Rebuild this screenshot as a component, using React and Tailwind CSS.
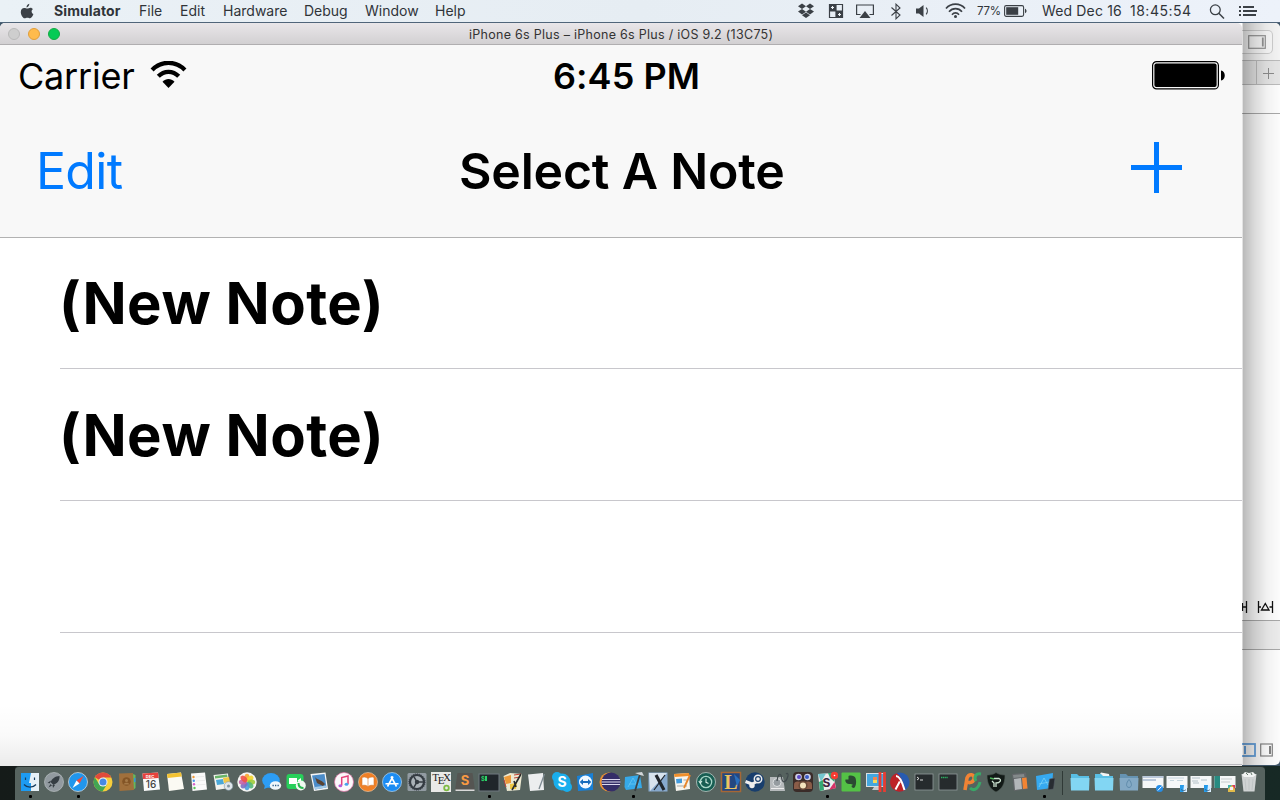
import React from 'react';

const S = ({ children, w = 22, h = 22, vb, className = '' }) => (
  <svg width={w} height={h} viewBox={vb || `0 0 ${w} ${h}`} className={`block shrink-0 ${className}`} fill="none">
    {children}
  </svg>
);

const Wifi = ({ w, h, color }) => (
  <svg width={w} height={h} viewBox="0 0 36 27" className="mb-[3px] block shrink-0" fill="none">
    <path d="M1.600 9C10.500-.6 25.500-.6 34.400 9" stroke={color} strokeWidth="4.200" />
    <path d="M7.800 15.300C13.500 9.300 22.500 9.300 28.200 15.300" stroke={color} strokeWidth="4.200" />
    <path d="M18 27L12 20.700C15.500 17.200 20.500 17.200 24 20.700Z" fill={color} />
  </svg>
);

const menus = [
  ['File', 'w-[41px]'],
  ['Edit', 'w-[43px]'],
  ['Hardware', 'w-[81px]'],
  ['Debug', 'w-[61px]'],
  ['Window', 'w-[70px]'],
  ['Help', 'w-[50px]'],
];

function MenuBar() {
  const c = '#3b4046';
  return (
    <div className="flex h-[23px] w-full items-center border-b border-[#50657a] bg-[linear-gradient(90deg,#eaf1f6,#e6edf3_50%,#edf2fa)] text-[14px] leading-[22px] text-[#303439]">
      <S w={14} h={17} className="ml-[20px]">
        <path d="M9.300.8C9.400 2.500 8.300 4.200 6.500 4.400 6.300 2.800 7.700 1.100 9.300.8Z" fill={c} />
        <path d="M12.800 6.200C11 7.300 11.200 10.200 13.400 11.100 12.800 13 11.500 15.300 10.100 15.300 9 15.300 8.700 14.700 7.400 14.700 6.100 14.700 5.700 15.300 4.700 15.300 2.800 15.300.8 11.900.8 9 .8 6.400 2.400 4.900 4.200 4.900 5.500 4.900 6.300 5.600 7.300 5.600 8.200 5.600 9.200 4.800 10.500 4.800 11.500 4.800 12.300 5.400 12.800 6.200Z" fill={c} />
      </S>
      <span className="ml-[20px] w-[85px] text-[14px] font-bold tracking-[0.100px]">Simulator</span>
      {menus.map(([m, w]) => (
        <span key={m} className={`${w} shrink-0 whitespace-nowrap`}>{m}</span>
      ))}
      <div className="flex-1" />
      <S w={18} h={16}>
        <path d="M5 .5L9 3.300 5 6 1 3.200ZM13 .5L17 3.200 13 6 9 3.300ZM1 8.500L5 6 9 8.700 5 11.400ZM17 8.500L13 6 9 8.700 13 11.400ZM5 12.200L9 9.500 13 12.200 9 15Z" fill={c} />
      </S>
      <S w={16} h={16} className="ml-[13px]">
        <path d="M1 1H8V8H1ZM8 8H15V15H8Z" fill={c} />
        <path d="M1.500 1.500H14.500V14.500H1.500ZM8 1V15M1 8H15" stroke={c} strokeWidth="1.200" />
        <path d="M4.500 3V6M3 4.500H6M11.500 10V13M10 11.500H13" stroke="#eef3f7" strokeWidth="1.100" />
      </S>
      <S w={20} h={16} className="ml-[11px]">
        <path d="M5.500 11.500H1.600V2H18.400V11.500H14.500" stroke={c} strokeWidth="1.200" />
        <path d="M10 8L15.500 15H4.500Z" fill={c} />
      </S>
      <S w={12} h={17} className="ml-[15px]">
        <path d="M1.500 4.500L10 12 6 15.800V1.200L10 5 1.500 12.500" stroke={c} strokeWidth="1.100" />
      </S>
      <S w={15} h={14} className="ml-[13px]">
        <path d="M1 4.500H4L8.500 1V13L4 9.500H1Z" fill={c} />
        <path d="M11.200 3.700C12.700 5.500 12.700 8.500 11.200 10.300" stroke={c} strokeWidth="1.200" />
      </S>
      <S w={21} h={16} className="ml-[15px]">
        <path d="M1 5.500C6-.3 15-.3 20 5.500M4 8.700C7.500 4.600 13.500 4.600 17 8.700M7 11.700C9 9.400 12 9.400 14 11.700" stroke={c} strokeWidth="1.700" />
        <circle cx="10.500" cy="13.600" r="1.500" fill={c} />
      </S>
      <span className="ml-[11px] w-[27px] text-[11.500px] tracking-[-0.200px] whitespace-nowrap">77%</span>
      <S w={23} h={14}>
        <rect x=".6" y="1.600" width="19" height="10.800" rx="1.600" stroke={c} strokeWidth="1.100" />
        <rect x="2.200" y="3.200" width="12" height="7.600" fill={c} />
        <path d="M21 4.800C23 5.500 23 8.500 21 9.200Z" fill={c} />
      </S>
      <span className="ml-[15px] w-[88px] tracking-[0.150px] whitespace-nowrap">Wed Dec 16</span>
      <span className="w-[79px] tracking-[0.500px] whitespace-nowrap">18:45:54</span>
      <S w={16} h={16}>
        <circle cx="6.300" cy="6.800" r="4.900" stroke={c} strokeWidth="1.300" />
        <path d="M9.800 10.300L15 15.500" stroke={c} strokeWidth="1.500" />
      </S>
      <S w={20} h={14} className="mr-[22px] ml-[13px]">
        <path d="M5 3H16M5 7H19M5 11H18" stroke={c} strokeWidth="2" />
        <path d="M1 3H3M1 7H3M1 11H3" stroke={c} strokeWidth="2" />
      </S>
    </div>
  );
}

function EditorWindow() {
  return (
    <div className="absolute top-[23px] left-[1200px] flex h-[742px] w-[80px] flex-col overflow-hidden rounded-t-[5px] rounded-br-[5px] bg-white pl-[42px]">
      <div className="flex h-[37px] bg-[#f6f6f6] pt-[7px]">
        <div className="flex h-[24px] w-[31px] items-center rounded-r-[5px] border border-l-0 border-[#cfcfcf] bg-[#fafafa] pl-[6px]">
          <S w={18} h={14}>
            <rect x=".7" y=".7" width="16.600" height="12.600" stroke="#969696" strokeWidth="1.200" />
            <path d="M14.800 2.500V11.500" stroke="#969696" strokeWidth="1.800" />
          </S>
        </div>
      </div>
      <div className="flex h-[25px] border-y border-[#bdbdbd] bg-[#e7e7e7]">
        <div className="w-[15px] shrink-0 border-r border-[#bdbdbd]" />
        <S w={23} h={23}>
          <path d="M11.500 7V18M6 12.500H17" stroke="#8d8d8d" />
        </S>
      </div>
      <div className="h-[29px] border-b border-[#aaaaaa] bg-white" />
      <div className="flex h-[507px] items-end border-b border-[#aaaaaa] pb-[6px]">
        <S w={38} h={14}>
          <path d="M4.500 1V13M0 7H4.500M.5 3V11M16.500 1V13M30.500 1V13M16 7H19M27.500 7H30.500M19.500 10L23.300 3.500 27 10Z" stroke="#111" strokeWidth="1.300" />
        </S>
      </div>
      <div className="h-[29px] border-b border-[#aaaaaa] bg-[#eeeeee]" />
      <div className="flex flex-1 items-end pb-[8px]">
        <S w={38} h={14}>
          <rect x="-5" y="1" width="18" height="12" stroke="#66a3df" strokeWidth="1.800" />
          <path d="M3 3V11" stroke="#66a3df" strokeWidth="2" />
          <rect x="18.700" y="1" width="11.600" height="12" stroke="#858585" strokeWidth="1.200" />
          <path d="M28 3V11" stroke="#777" strokeWidth="1.800" />
        </S>
      </div>
      <div className="absolute inset-y-0 right-0 w-[38px] border-l border-black/10 bg-[linear-gradient(90deg,rgba(0,0,0,.27),rgba(0,0,0,.15)_30%,rgba(0,0,0,.05)_65%,rgba(0,0,0,.01))]" />
    </div>
  );
}

function NoteRow({ text, className = 'h-[132px] pt-[2px]' }) {
  return (
    <div className={`${className} ml-[60px] flex shrink-0 items-center border-b border-[#c8c7cc] pl-px`}>
      <span className="-ml-[2px] text-[58px] font-bold tracking-[0.500px] whitespace-nowrap">{text}</span>
    </div>
  );
}

function SimulatorWindow() {
  return (
    <div className="absolute top-[23px] left-0 flex h-[743px] w-[1242px] flex-col overflow-hidden rounded-t-[5px] bg-white text-black">
      <div className="flex h-[22px] shrink-0 items-center border-b border-[#b0aeb0] bg-[linear-gradient(#e9e6e9,#d2d0d2)] pl-[8px]">
        <div className="flex w-[461px] gap-[8px]">
          <div className="size-[12px] rounded-full border border-[#b9b9b9] bg-[#cecece]" />
          <div className="size-[12px] rounded-full border border-[#e09e3b] bg-[#ffbb4c]" />
          <div className="size-[12px] rounded-full border border-[#15a944] bg-[#06cb55]" />
        </div>
        <span className="pt-[2px] text-[12.500px] leading-[18px] tracking-[0.280px] whitespace-nowrap text-[#333]">iPhone 6s Plus – iPhone 6s Plus / iOS 9.2 (13C75)</span>
      </div>
      <div className="flex h-[193px] shrink-0 flex-col border-b border-[#b2b2b2] bg-[#f8f8f8]">
        <div className="flex h-[62px] items-center pl-[18px]">
          <span className="w-[132px] text-[36px] tracking-[-0.200px] whitespace-nowrap">Carrier</span>
          <Wifi w={37} h={27} color="#000" />
          <span className="ml-[366px] w-[599px] text-[36px] font-semibold tracking-[0.050px] whitespace-nowrap">6:45 PM</span>
          <S w={74} h={30} className="mb-[2px]">
            <rect x=".6" y="1.600" width="65.800" height="27.300" rx="4" stroke="#000" strokeWidth="1.200" />
            <rect x="2.400" y="3.400" width="62.200" height="23.700" rx="2" fill="#000" />
            <path d="M69 10.500C74 11 74 20 69 20.500Z" fill="#000" />
          </S>
        </div>
        <div className="flex h-[130px] items-start pt-[27px] pl-[36px]">
          <span className="w-[423px] text-[50px] leading-[74px] tracking-[-0.700px] whitespace-nowrap text-[#007aff]">Edit</span>
          <span className="w-[672px] text-[50px] leading-[74px] font-semibold tracking-[-0.200px] whitespace-nowrap">Select A Note</span>
          <S w={51} h={52} className="mt-[8px]">
            <path d="M25.500 0V51M0 25.500H51" stroke="#007aff" strokeWidth="5" />
          </S>
        </div>
      </div>
      <NoteRow text="(New Note)" className="h-[131px]" />
      <NoteRow text="(New Note)" />
      <NoteRow text="" />
      <NoteRow text="" />
      <div className="absolute inset-x-0 bottom-0 h-[62px] bg-[linear-gradient(rgba(0,0,0,0),rgba(0,0,0,.02)_50%,rgba(0,0,0,.08))]" />
    </div>
  );
}

const Disc = ({ fill, stroke = '#b9c0c2', children }) => (
  <>
    <circle cx="11" cy="11" r="9.500" fill={fill} stroke={stroke} strokeWidth=".7" />
    {children}
  </>
);
const Glyph = ({ x = 11, y = 16, s = 14, f = '#fff', w = 700, children, serif }) => (
  <text x={x} y={y} fontSize={s} fill={f} textAnchor="middle" fontWeight={w} fontFamily={serif ? 'Liberation Serif, serif' : 'Inter, sans-serif'}>{children}</text>
);
const petals = ['#f7a531', '#f3d62c', '#9fcc3b', '#54b877', '#4a9ed8', '#7b6fc2', '#c564a8', '#ee5148'];

const apps = [
  // Finder
  <><path d="M2 2H20V20H2Z" fill="#e6f0f7" /><path d="M2 2H12L10 12H12V20H2Z" fill="#1d9bf2" /><path d="M6.500 6.500V9M15.500 6.500V9M5 13.500C8 17 14 17 17 13.500" stroke="#173d60" strokeWidth="1.200" /></>,
  // Launchpad
  <Disc fill="#929aa0"><path d="M16.500 5C12 5 9 8 7.500 11L10.500 14C14 12.500 17 9.500 16.500 5ZM7.800 9.500L4.500 12 7 12.200ZM12 14L10 17 9.500 14ZM7.500 13L5.500 16.500 9 14.500Z" fill="#353d43" /></Disc>,
  // Safari
  <Disc fill="#2196ed" stroke="#dce4e8"><path d="M16.500 5L9.500 9.500 12.500 12.500Z" fill="#f34b3d" /><path d="M5.500 17L9.500 9.500 12.500 12.500Z" fill="#fff" /></Disc>,
  // Chrome
  <><circle cx="11" cy="11" r="9.500" fill="#f6ce3b" /><path d="M11 11L2.800 6.200A9.500 9.500 0 0 1 19.300 6.500H11Z" fill="#e04a3c" /><path d="M2.800 6.200A9.500 9.500 0 0 0 10.500 20.500L15 13.200 11 11 7 13Z" fill="#42a553" /><circle cx="11" cy="11" r="4.500" fill="#f4f4f4" /><circle cx="11" cy="11" r="3.500" fill="#4589e3" /></>,
  // Contacts
  <><path d="M17 3L19.500 4V17L17 19Z" fill="#65b95e" /><path d="M18 7H19.500V11H18Z" fill="#3693d9" /><path d="M3 2.500L17 2 18 19 3.500 20Z" fill="#a0703c" /><circle cx="10.500" cy="10.500" r="4.300" fill="#835526" /><circle cx="10.500" cy="9.500" r="1.500" fill="#a57a48" /><path d="M7.500 13.500C8 11 13 11 13.500 13.500" fill="#a57a48" /></>,
  // Calendar
  <><path d="M2.500 2.500L18 1.500 20 18.500 4 20Z" fill="#fafafa" /><path d="M2.500 2.500L18 1.500 18.700 7 3 8Z" fill="#e8423c" /><Glyph x={11} y={16.500} s={10} f="#444" w={500}>16</Glyph><Glyph x={10} y={6.500} s={4}>DEC</Glyph></>,
  // Notes
  <><path d="M3 3L17 1.500 20 18 5 20Z" fill="#fbfaf3" /><path d="M3 3L17 1.500 17.800 5.500 3.500 7Z" fill="#f3c232" /></>,
  // Reminders
  <><path d="M3 2.500L17 1.500 19 18.500 4.500 20Z" fill="#fafafa" /><path d="M7.500 6L16 5.500M8 10L17 9.300M8.300 14L17.500 13.300" stroke="#ddd" strokeWidth=".5" /><circle cx="5.500" cy="6" r="1.200" fill="#f29a37" /><circle cx="5.800" cy="9.700" r="1.200" fill="#4a98e8" /><circle cx="6" cy="13.300" r="1.200" fill="#d55fc9" /><circle cx="6.500" cy="17" r="1.200" fill="#5ac35b" /></>,
  // Maps
  <><path d="M1.500 4L16 2.500 17.500 17 4 19Z" fill="#f2f2ee" /><path d="M3 5L15 3.500 15.500 6 3 7.500Z" fill="#69b569" /><path d="M4 9L11 8 12 13 5 14Z" fill="#4aa8d8" /><path d="M11 7L17 6 18 11 12 12Z" fill="#f1c846" /><circle cx="16.500" cy="15" r="4.300" fill="#dfe6eb" stroke="#8094a1" strokeWidth=".6" /><circle cx="16.500" cy="15" r="1.500" fill="#8094a1" /></>,
  // Photos
  <><circle cx="11" cy="11" r="9.700" fill="#f5f5f3" />{petals.map((p, i) => <ellipse key={p} cx="11" cy="6.700" rx="2.600" ry="3.900" fill={p} fillOpacity=".9" transform={`rotate(${i * 45} 11 11)`} />)}</>,
  // Messages
  <><ellipse cx="10" cy="9.500" rx="8.800" ry="7.500" fill="#2c9df4" /><path d="M4 14L3 18 8 16Z" fill="#2c9df4" /><ellipse cx="14.500" cy="14.500" rx="5.700" ry="4.300" fill="#f0f6fa" /><path d="M11.500 14.500H12.800M14 14.500H15.300M16.500 14.500H17.800" stroke="#2b5e8a" strokeWidth="1.400" /></>,
  // FaceTime
  <><rect x="1.500" y="3" width="17" height="15" rx="3" fill="#27cf5a" /><path d="M4 7H12V13H4ZM12.500 9.500L16 7V12Z" fill="#fff" /><circle cx="15.800" cy="14.500" r="5" fill="#effaf0" /><path d="M13.500 12C13.500 15 15.500 17 18.500 17" stroke="#27b950" strokeWidth="2" /></>,
  // Mail
  <><path d="M1.500 3L16.500 1.500 19 18 5 20Z" fill="#f4f5f5" /><path d="M3 4.500L15.500 3 17.500 16.500 6 18.500Z" fill="#4b8cc8" /><path d="M6 6C8 9 12 8 16 13L14 15 8 12Z" fill="#594332" /><path d="M5.800 16L17.300 14.500 17.500 16.500 6 18.500Z" fill="#a4cbe7" /></>,
  // iTunes
  <Disc fill="#fbf8fb" stroke="#e46ea3"><path d="M8.700 14.500V6.500L15 5V13" stroke="#e5437b" strokeWidth="1.500" /><ellipse cx="7.300" cy="14.700" rx="1.900" ry="1.500" fill="#b65cda" /><ellipse cx="13.500" cy="13.200" rx="1.900" ry="1.500" fill="#49a3ed" /></Disc>,
  // iBooks
  <Disc fill="#f08026" stroke="#e7c4a4"><path d="M11 7.500C8.500 5.500 6 6 5 6.500V14.500C7 14 9 14 11 15.500 13 14 15 14 17 14.500V6.500C15 5.700 13 6 11 7.500ZV15" fill="#fff" stroke="#d4752c" strokeWidth=".6" /></Disc>,
  // App Store
  <Disc fill="#1c8cf2" stroke="#b9d8ef"><path d="M6.500 15.500L12 5.500M10 5.500L15.500 15.500M4.500 12.800H17.500" stroke="#fff" strokeWidth="1.600" /></Disc>,
  // System Preferences
  <><rect x="1.500" y="2" width="19" height="18" rx="1.500" fill="#929ba2" /><circle cx="11" cy="11" r="7" fill="#a9b1b7" stroke="#343b42" strokeWidth="2.200" /><circle cx="11" cy="11" r="8.100" stroke="#343b42" strokeWidth="1" strokeDasharray="1.200 .9" /><path d="M11 11H17M11 11L8 5.800M11 11L8 16.200" stroke="#343b42" strokeWidth="1.500" /><circle cx="11" cy="11" r="2.200" fill="#343b42" /></>,
  // TeX
  <><rect x="1" y="1" width="20" height="20" fill="#e9e9e7" /><Glyph x={5.500} y={10} s={11} f="#222" w={400} serif>T</Glyph><Glyph x={11} y={13} s={11} f="#222" w={400} serif>E</Glyph><Glyph x={17} y={10} s={11} f="#222" w={400} serif>X</Glyph><circle cx="16.500" cy="17" r="2.300" stroke="#7ebb43" strokeWidth="1.800" /></>,
  // Sublime
  <><path d="M3.500 2H18.500L20.500 16V20H1.500V16Z" fill="#555552" /><path d="M1.500 18.500H20.500V20H1.500Z" fill="#dadada" /><Glyph y={14} s={13} f="#f79a43">S</Glyph></>,
  // iTerm
  <><rect x="1" y="3" width="20" height="17" fill="#20262b" stroke="#6f7980" /><Glyph x={5} y={10} s={6} f="#2bd269">$</Glyph><path d="M8 5V10" stroke="#2bd269" strokeWidth="2" /></>,
  // Note pages
  <><path d="M1.500 5L8 2 20 3 18 19 5 20Z" fill="#ece9d1" /><path d="M2 6L9 4 9 12 4 13Z" fill="#ed9a38" /><path d="M8 13L15 12 14 18 8 18Z" fill="#efc843" /><path d="M12 4L19 3M12 7L18 6M2 9L4 16" stroke="#bf4438" /><path d="M10 19L19 3M12 10L14 16" stroke="#292c2c" strokeWidth="1.600" /></>,
  // TextEdit
  <><path d="M2 3.500L17 2 18 19 4 20Z" fill="#eceeef" /><path d="M18.500 3L13 18" stroke="#7c8990" strokeWidth="1.300" /></>,
  // Skype
  <><circle cx="11" cy="11" r="8.500" fill="#19aeed" /><circle cx="6" cy="6" r="5" fill="#19aeed" /><circle cx="16" cy="16" r="5" fill="#19aeed" /><Glyph s={14}>S</Glyph></>,
  // TeamViewer
  <><path d="M2 5L18 2V19L3 20Z" fill="#1880d7" /><circle cx="10.500" cy="11" r="6.500" fill="#f1f8ff" /><path d="M4.700 11L8 8V10H13V8L16.300 11 13 14V12H8V14Z" fill="#176cbd" /></>,
  // Eclipse
  <><circle cx="10" cy="11" r="9.500" fill="#ed9233" /><circle cx="12" cy="11" r="9.500" fill="#352e68" /><path d="M3 8.500H21M2.500 11H21.500M3 13.500H21" stroke="#dcd9ee" strokeWidth="1.200" /></>,
  // Xcode
  <><path d="M2 6L17 4 19 17 3 19 1.500 16Z" fill="#36a9e9" /><path d="M5 16L10 7 15 16M6 13H16" stroke="#6ccaf4" strokeWidth=".7" /><path d="M12 20L17 3" stroke="#3b4246" strokeWidth="1.800" /><path d="M12 2L19 1 21 5 17 4Z" fill="#d2d7d9" /></>,
  // X
  <><rect x="1.500" y="1.500" width="19" height="19" fill="#87a9cd" /><path d="M2 2H20L3 20Z" fill="#d8e3ed" /><path d="M9 4L17 19" stroke="#20252b" strokeWidth="3.200" /><path d="M18 4L7 19" stroke="#20252b" strokeWidth="1.200" /></>,
  // Pages
  <><path d="M3 3L18 2 19 18 5 20Z" fill="#f6f4ee" /><path d="M3 3L18 2V5L3.500 6Z" fill="#ef8f2b" /><path d="M5 8L11 7.500V12L5.500 12.500Z" fill="#429bdd" /><path d="M6 15H16M12.500 9H17" stroke="#a9a9a5" /><path d="M19 4L13 17" stroke="#e7862c" strokeWidth="1.800" /></>,
  // Time Machine
  <Disc fill="#185e53" stroke="#d0dbd7"><circle cx="11" cy="11" r="5.700" stroke="#a8d6c8" strokeWidth="1.300" /><path d="M11 7.500V11.300L13.500 12.500M3.800 10L5.300 12 7 10" stroke="#d8eee6" strokeWidth="1.100" /></Disc>,
  // League
  <><rect x="1.500" y="1.500" width="19" height="19" fill="#234781" stroke="#a66736" strokeWidth="1.500" /><path d="M14 3L20 9 17 16Z" fill="#2a6fbc" /><Glyph y={18} s={20} f="#ecc461" serif>L</Glyph></>,
  // Steam
  <><circle cx="11" cy="11" r="9.700" fill="#183e6d" /><circle cx="14" cy="8" r="3.700" stroke="#eee" strokeWidth="1.500" /><circle cx="14" cy="8" r="1.800" fill="#eee" /><path d="M1.500 10.500L8 13 12 11" stroke="#eee" strokeWidth="3" /><circle cx="8" cy="14.500" r="2.700" fill="#eee" /></>,
  // Disk Utility
  <><path d="M2 6H15L17 20H2Z" fill="#b5b9bb" /><circle cx="9" cy="11.500" r="4" fill="#959ca0" stroke="#dde0e1" /><path d="M9 10C10 2 13 2 13.500 6 14 13 18 12 20 5 20.500 2 19 2 18 3" stroke="#414a4d" strokeWidth="1.200" /><path d="M3 17.500H16" stroke="#eee" /></>,
  // Game
  <><rect x="1" y="1" width="20" height="20" rx="4" fill="#3a2b28" /><path d="M2 14C2 9 7 11 11 11 15 11 20 9 20 14V18H2Z" fill="#8a5c48" /><circle cx="6.500" cy="6" r="3.300" fill="#cfd1e6" /><circle cx="15.500" cy="6" r="3.300" fill="#cfd1e6" /><circle cx="7" cy="6" r="2" fill="#5b48c4" /><circle cx="15" cy="6" r="2" fill="#3b5bc6" /><circle cx="11" cy="14.500" r="4.600" fill="#6b4a38" /><circle cx="11" cy="14.500" r="3" fill="#f3e3bd" /></>,
  // Slack
  <><path d="M2 3L17 2 20 17 4 20Z" fill="#eee" /><path d="M2 3L10 2.500 5 11Z" fill="#74c7cf" /><path d="M3 11L7 9 8 19 4 20Z" fill="#34a875" /><path d="M13 19L20 17 18.500 11Z" fill="#d73168" /><path d="M12 2L17 2 18.500 11 14 7Z" fill="#34a875" /><Glyph x={10.500} y={15.500} s={12} f="#40233e">S</Glyph><circle cx="18.500" cy="4.500" r="3.800" fill="#f53b32" /><circle cx="18.500" cy="4.500" r=".8" fill="#fff" /></>,
  // Evernote
  <><rect x="1.500" y="1.500" width="19" height="19" rx="1" fill="#54c246" /><path d="M8.500 5C11 4 15 5 15.500 7 17 12 15.500 16 14 17 11 17 11 14 13 14 11 12 9 13.500 7 12.500 5.500 11.500 5 9.500 5.500 8.500H8.500Z" fill="#2c4a33" /></>,
  // Parallels
  <><rect x="1" y="2" width="19" height="14" fill="#d8dfe3" /><rect x="2" y="3" width="17" height="12" fill="#44a7df" /><path d="M8 6H12V9H8Z" fill="#f3874e" /><path d="M8 9H12V12H8Z" fill="#f4da5d" /><path d="M9 16H14V19H7Z" fill="#c4c9cc" /><path d="M15 1V21M19.500 1V21" stroke="#e73c33" strokeWidth="2.800" /></>,
  // Racket
  <><circle cx="11" cy="11" r="9.500" fill="#285bb0" /><path d="M4 18A9.500 9.500 0 0 1 7.500 2.200C11 4 14 10 16 19A9.500 9.500 0 0 1 4 18Z" fill="#bd2327" /><path d="M7 5C10 5 13 10 15.500 19M10.800 10.500L6.500 18.500" stroke="#fff" strokeWidth="2" /></>,
  // Terminal
  <><rect x="2" y="3" width="18" height="16" fill="#262b2d" stroke="#90989a" strokeWidth=".8" /><path d="M4 6L6 7.500 4 9M7 9H10" stroke="#eee" strokeWidth=".9" /></>,
  // Exec
  <><rect x="2" y="3" width="18" height="16" fill="#262b2d" stroke="#90989a" strokeWidth=".8" /><path d="M4 6.500H11" stroke="#2eac62" strokeWidth="1.400" strokeDasharray="1.300 .5" /></>,
  // Paint strokes
  <><path d="M4 19L6 7C8 2 14 3 13 8 12 12 8 12 6 11" stroke="#f18334" strokeWidth="3.600" /><path d="M20 3C14 2 13 7 15 10M19 11C17 19 12 20 9 17" stroke="#39a768" strokeWidth="3" /></>,
  // Shield
  <><path d="M2 4C7 4 9 3 11 1.500 13 3 16 4 20 4 20 13 17 18 11 21 5 18 2 13 2 4Z" fill="#121a17" stroke="#515c57" strokeWidth=".6" /><path d="M7 10L9 12V16M9 7.500H14C17 9 15 12 11 12V16" stroke="#cde4d2" strokeWidth="1.300" /><path d="M5 7L9 8" stroke="#4fb15c" strokeWidth="1.500" /></>,
  // Calculator
  <><path d="M3 3L17 1.500 19 18 5 20Z" fill="#626669" /><path d="M4 4L15 3 15.500 6 4.500 7Z" fill="#83898a" /><path d="M5 8L12 7 13 18 6 19Z" fill="#b2b7b9" /><path d="M13 7L17.500 6.500 18.500 17.500 14 18Z" fill="#f18433" /></>,
  // Simulator
  <><path d="M2 5L19 2 18 17 3 19Z" fill="#36a9f0" /><path d="M5 16L10 7 14 14M5 13L15 11" stroke="#81d5f6" strokeWidth=".7" /><path d="M15.500 8L21 7 19.500 18 14 19Z" fill="#272c32" stroke="#596169" strokeWidth=".6" /></>,
];
const running = [0, 2, 19, 25, 33, 42];

const Folder = ({ dark, papers }) => (
  <>
    {papers && <path d="M5 6L8 1.500 16 3 17 8H5Z" fill="#f2f4f4" />}
    <path d="M2 3H8L10 5H20V19H2Z" fill={dark ? '#6693b2' : '#59bfe5'} />
    <path d="M1.500 7H20.500L20 19.500H2Z" fill={dark ? '#83a9c5' : '#82d6f3'} />
    {dark && <path d="M11 8.500C8 12 7.500 16 11 16.500 14.500 16 14 12 11 8.500Z" stroke="#5e8aaa" />}
  </>
);
const Thumb = ({ kind }) => (
  <>
    <rect x=".5" y="5" width="21" height="12" fill="#f5f7f8" />
    {kind === 0 && <path d="M.5 6H21.500M.5 9H14" stroke="#8099bb" strokeWidth="1.200" />}
    {kind === 1 && <path d="M2 7H18M4 9.500H8M11 9.500H17" stroke="#b9ccd6" strokeWidth=".8" />}
    {kind === 2 && <path d="M2 7H10M2 10H8M11 9H17M3 12H9" stroke="#9aabb5" strokeWidth=".7" />}
    {kind === 3 && <><path d="M.5 5H6V17H.5Z" fill="#288b81" /><path d="M7 8H18M7 11H16" stroke="#b5b9bd" strokeWidth=".7" /></>}
    {kind === 0 && <><circle cx="17.500" cy="17.500" r="3.500" fill="#268ee8" /><path d="M19.500 15.500L15.800 19.500" stroke="#fff" /></>}
    {(kind === 1 || kind === 2) && <><path d="M14 14H21V21H14Z" fill="#dcefff" /><path d="M14 14H18L17.500 18V21H14Z" fill="#269bea" /><path d="M15 18.500C17 20 19 20 20 18.500" stroke="#33546e" strokeWidth=".7" /></>}
    {kind === 3 && <><path d="M14 14H21V21H14Z" fill="#e2bb4a" /><path d="M14 14H18L14 18Z" fill="#42b4ae" /><path d="M18 14H21V18Z" fill="#dc3861" /><path d="M16 16H19V19H16Z" fill="#f7eef4" /></>}
  </>
);
const docks = [
  <Folder />,
  <Folder papers />,
  <Folder dark />,
  <Thumb kind={0} />,
  <Thumb kind={1} />,
  <Thumb kind={2} />,
  <Thumb kind={3} />,
  <><path d="M3.500 3H18.500L16.500 20.500H5.500Z" fill="#cfd3d3" /><path d="M4 4L7 1 11 2 15 1 18 4 15 6H6Z" fill="#f1f4f3" /><path d="M8 2L10 4M13 2L14 4" stroke="#62786a" /><path d="M7 8L8 19M11 8V19M15 8L14 19" stroke="#b6bcbc" strokeWidth=".6" /></>,
];

const DockItem = ({ on, children }) => (
  <div className="flex h-[33px] w-[24.170px] shrink-0 flex-col items-center pt-[4px]">
    <S w={22} h={22}>{children}</S>
    {on && <div className="mt-[2px] size-[3px] rounded-[1px] bg-black" />}
  </div>
);

function Dock() {
  return (
    <div className="absolute top-[766px] left-0 flex h-[34px] w-full justify-center bg-[linear-gradient(90deg,#151b19,#172925)]">
      <div className="flex h-[34px] w-[1250px] rounded-t-[4px] border-t border-[#29322f] bg-[#56635f] pl-[3px]">
        {apps.map((a, i) => <DockItem key={i} on={running.includes(i)}>{a}</DockItem>)}
        <div className="mt-[4px] ml-[5.500px] h-[24px] w-px bg-[#303a37]" />
        <div className="ml-[5px] flex">
          {docks.map((a, i) => <DockItem key={i}>{a}</DockItem>)}
        </div>
      </div>
    </div>
  );
}

export default function App() {
  return (
    <div className="relative h-[800px] w-[1280px] overflow-hidden bg-[#3f5568] font-['Inter','Liberation_Sans',sans-serif]">
      <MenuBar />
      <EditorWindow />
      <SimulatorWindow />
      <Dock />
    </div>
  );
}
